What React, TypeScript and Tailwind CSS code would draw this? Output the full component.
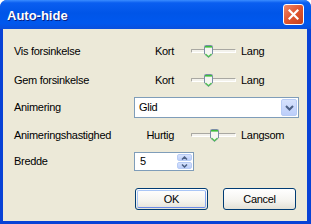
import React from 'react'

const font = { fontFamily: '"Liberation Sans", Arial, sans-serif' }

function Thumb() {
  return (
    <svg width="9" height="13" viewBox="0 0 9 13">
      <path
        d="M0.5 1.5 Q0.5 0.5 1.5 0.5 H7.5 Q8.5 0.5 8.5 1.5 V9 L4.5 12.5 L0.5 9 Z"
        fill="#f6f6f2"
        stroke="#7b8da6"
      />
      <rect x="1" y="1" width="7" height="1.6" fill="#3dbb3d" />
      <path d="M1.5 9 L4.5 11.6 L7.5 9" fill="none" stroke="#4fc34f" strokeWidth="1.2" />
    </svg>
  )
}

function Slider({ left, right, pos }: { left: string; right: string; pos: number }) {
  return (
    <div className="ml-[11px] flex items-center">
      <div className="w-[40px] text-right">{left}</div>
      <div className="relative ml-[17px] h-[13px] w-[45px]">
        <div className="absolute left-0 right-0 top-[4px] h-[4px] rounded-[1px] border border-[#a9a8a2] border-b-white border-r-white bg-[#f3f2ec]" />
        <div className="absolute top-0" style={{ left: pos }}>
          <Thumb />
        </div>
      </div>
      <div className="ml-[5px]">{right}</div>
    </div>
  )
}

function Row({ label, children, h, mt }: { label: string; children: React.ReactNode; h: string; mt: string }) {
  return (
    <div className={`flex items-center ${h} ${mt}`}>
      <div className="w-[120px] pl-[11px]">{label}</div>
      <div className="flex-1">{children}</div>
    </div>
  )
}

function XpButton({ label, def }: { label: string; def?: boolean }) {
  return (
    <div className="h-[22px] w-[73px] rounded-[3px] border border-[#003c74] bg-[linear-gradient(to_bottom,#ffffff_0%,#f4f3ee_60%,#e3e1d6_100%)] p-px">
      <div
        className={
          def
            ? 'flex h-full items-center justify-center rounded-[2px] border border-[#a9c6f6] border-b-[#6a8ae8] border-r-[#8aa7ee]'
            : 'flex h-full items-center justify-center'
        }
      >
        {label}
      </div>
    </div>
  )
}

export default function App() {
  return (
    <div
      className="flex h-[224px] w-[311px] flex-col overflow-hidden rounded-t-[7px] bg-[#0842d6] text-[11px] tracking-[-0.3px] text-black"
      style={font}
    >
      {/* titlebar */}
      <div className="flex h-[29px] items-center justify-between bg-[linear-gradient(to_bottom,#3a8cff_0%,#0a5ef0_10%,#0055e8_45%,#0058ee_80%,#0a4fdc_100%)] pl-[7px] pr-[7px]">
        <div className="pt-[2px] text-[13px] font-bold tracking-normal text-white [text-shadow:1px_1px_0_#0a1f80]">
          Auto-hide
        </div>
        <div className="flex h-[21px] w-[21px] items-center justify-center rounded-[3px] border border-white bg-[linear-gradient(135deg,#f0896a_0%,#e0552f_50%,#c5401c_100%)]">
          <svg width="11" height="11" viewBox="0 0 11 11">
            <path d="M1.5 1.5 L9.5 9.5 M9.5 1.5 L1.5 9.5" stroke="white" strokeWidth="2.2" strokeLinecap="square" />
          </svg>
        </div>
      </div>

      {/* body */}
      <div className="ml-[3px] mr-[4px] mb-[3px] flex flex-1 flex-col bg-[#ece9d8]">
        <Row label="Vis forsinkelse" h="h-[20px]" mt="mt-[12px]">
          <Slider left="Kort" right="Lang" pos={13} />
        </Row>
        <Row label="Gem forsinkelse" h="h-[20px]" mt="mt-[9px]">
          <Slider left="Kort" right="Lang" pos={13} />
        </Row>
        <Row label="Animering" h="h-[21px]" mt="mt-[7px]">
          <div className="ml-[11px] flex h-[21px] w-[165px] items-center border border-[#7f9db9] bg-white p-px">
            <div className="flex-1 pl-[3px]">Glid</div>
            <div className="flex h-full w-[16px] items-center justify-center rounded-[2px] border border-[#b8ccf5] bg-[linear-gradient(to_bottom,#d6e2fc_0%,#bccefa_100%)]">
              <svg width="9" height="6" viewBox="0 0 9 6">
                <path d="M1 1 L4.5 4.5 L8 1" fill="none" stroke="#4d6185" strokeWidth="2" />
              </svg>
            </div>
          </div>
        </Row>
        <Row label="Animeringshastighed" h="h-[20px]" mt="mt-[7px]">
          <Slider left="Hurtig" right="Langsom" pos={19} />
        </Row>
        <Row label="Bredde" h="h-[19px]" mt="mt-[7px]">
          <div className="ml-[11px] flex h-[19px] w-[60px] items-center border border-[#7f9db9] bg-white p-px">
            <div className="flex-1 pl-[4px]">5</div>
            <div className="flex h-full w-[15px] flex-col gap-px">
              <div className="flex flex-1 items-center justify-center rounded-[2px] border border-[#b8ccf5] bg-[linear-gradient(to_bottom,#d6e2fc_0%,#bccefa_100%)]">
                <svg width="7" height="4" viewBox="0 0 7 4">
                  <path d="M1 3.5 L3.5 1 L6 3.5" fill="none" stroke="#4d6185" strokeWidth="1.5" />
                </svg>
              </div>
              <div className="flex flex-1 items-center justify-center rounded-[2px] border border-[#b8ccf5] bg-[linear-gradient(to_bottom,#d6e2fc_0%,#bccefa_100%)]">
                <svg width="7" height="4" viewBox="0 0 7 4">
                  <path d="M1 0.5 L3.5 3 L6 0.5" fill="none" stroke="#4d6185" strokeWidth="1.5" />
                </svg>
              </div>
            </div>
          </div>
        </Row>
        <div className="mt-[17px] flex gap-[15px] pl-[132px]">
          <XpButton label="OK" def />
          <XpButton label="Cancel" />
        </div>
      </div>
    </div>
  )
}
